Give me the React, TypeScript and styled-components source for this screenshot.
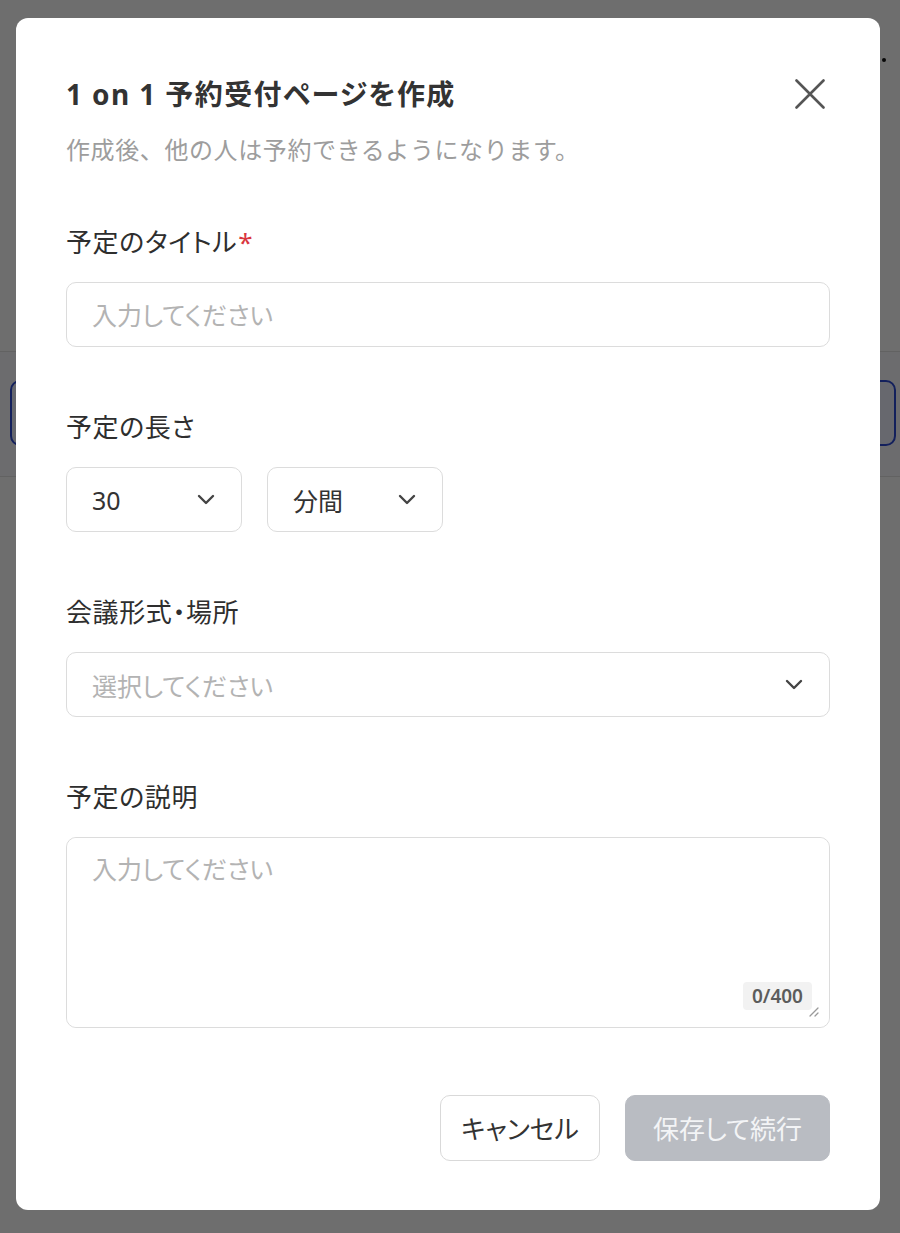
import React from 'react';
import styled, { createGlobalStyle } from 'styled-components';

const GlobalStyle = createGlobalStyle`
  * { box-sizing: border-box; }
  body {
    margin: 0;
    font-family: "Noto Sans", "Noto Sans CJK JP", sans-serif;
    font-feature-settings: "palt";
    background: #ffffff;
  }
`;

/* underlying page, mostly hidden behind the overlay */
const Page = styled.div`
  height: 1233px;
  display: flex;
  flex-direction: column;
`;

const PageHeader = styled.div`
  height: 128px;
  display: flex;
  justify-content: flex-end;
  padding: 58px 14px 0 0;
`;

const MoreDot = styled.span`
  width: 4px;
  height: 4px;
  border-radius: 50%;
  background: #111;
`;

const PageToolbar = styled.div`
  height: 224px;
  border-bottom: 1px solid #e3e3e3;
`;

const PageRow = styled.div`
  height: 125px;
  padding: 28px 4px 0 10px;
  border-bottom: 1px solid #e3e3e3;
  background: #fafbff;
`;

const OutlineBox = styled.div`
  height: 66px;
  border: 2px solid #2e4bd6;
  border-radius: 10px;
  background: #eef1ff;
`;

const Overlay = styled.div`
  position: fixed;
  inset: 0;
  background: rgba(0, 0, 0, 0.57);
  padding: 18px 20px 0 16px;
`;

const Modal = styled.div`
  width: 864px;
  background: #ffffff;
  border-radius: 12px;
  padding: 60px 50px 49px 50px;
  display: flex;
  flex-direction: column;
`;

const Header = styled.div`
  display: flex;
  justify-content: space-between;
  align-items: flex-start;
`;

const TitleBlock = styled.div`
  display: flex;
  flex-direction: column;
  gap: 25px;
`;

const Title = styled.h2`
  margin: 0;
  font-size: 28px;
  line-height: 32px;
  font-weight: 700;
  letter-spacing: 1.4px;
  color: #333333;
`;

const Subtitle = styled.p`
  margin: 0;
  font-size: 24px;
  line-height: 30px;
  letter-spacing: 0.6px;
  font-feature-settings: normal;
  color: #9d9d9d;
`;

const CloseButton = styled.button`
  border: none;
  background: none;
  padding: 0;
  margin: 1px 5px 0 0;
  width: 30px;
  height: 30px;
  cursor: pointer;
  display: flex;
`;

const Fields = styled.div`
  display: flex;
  flex-direction: column;
  gap: 65px;
  margin-top: 62px;
`;

const Field = styled.div`
  display: flex;
  flex-direction: column;
  gap: 25px;
`;

const Label = styled.label`
  font-size: 26px;
  line-height: 30px;
  font-weight: 400;
  letter-spacing: 0.6px;
  color: #2e2e2e;
`;

const Required = styled.span`
  color: #d9363e;
  margin-left: 1px;
`;

const TextInput = styled.input`
  height: 65px;
  width: 100%;
  border: 1.5px solid #dcdcdc;
  border-radius: 10px;
  padding: 0 25px;
  font-family: inherit;
  font-feature-settings: "palt";
  font-size: 25px;
  color: #333;
  outline: none;
  &::placeholder { color: #b3b3b3; }
`;

const SelectRow = styled.div`
  display: flex;
  gap: 25px;
`;

const SelectBox = styled.div<{ $width?: number }>`
  height: 65px;
  width: ${({ $width }) => ($width ? `${$width}px` : '100%')};
  border: 1.5px solid #dcdcdc;
  border-radius: 10px;
  padding: 0 26px 0 25px;
  display: flex;
  align-items: center;
  justify-content: space-between;
`;

const SelectValue = styled.span<{ $placeholder?: boolean }>`
  font-size: 25px;
  color: ${({ $placeholder }) => ($placeholder ? '#b3b3b3' : '#333333')};
`;

const TextAreaWrap = styled.div`
  position: relative;
  height: 191px;
  border: 1.5px solid #dcdcdc;
  border-radius: 10px;
`;

const TextArea = styled.textarea`
  width: 100%;
  height: 100%;
  border: none;
  border-radius: 10px;
  resize: none;
  outline: none;
  padding: 14px 25px;
  font-family: inherit;
  font-feature-settings: "palt";
  font-size: 25px;
  line-height: 34px;
  color: #333;
  &::placeholder { color: #b3b3b3; }
`;

const Counter = styled.span`
  position: absolute;
  right: 17px;
  bottom: 17px;
  background: #f2f2f2;
  border-radius: 4px;
  padding: 0 9px;
  font-size: 19px;
  line-height: 28px;
  font-weight: 600;
  color: #5c5c5c;
`;

const ResizeHandle = styled.svg`
  position: absolute;
  right: 10px;
  bottom: 10px;
`;

const Footer = styled.div`
  display: flex;
  justify-content: flex-end;
  gap: 25px;
  margin-top: 67px;
`;

const Button = styled.button<{ $primary?: boolean }>`
  height: 66px;
  padding: 0 ${({ $primary }) => ($primary ? '27px' : '20px')};
  border-radius: 10px;
  font-family: inherit;
  font-feature-settings: "palt";
  font-size: 26px;
  font-weight: 400;
  border: 1.5px solid ${({ $primary }) => ($primary ? '#b9bcc2' : '#d9d9d9')};
  background: ${({ $primary }) => ($primary ? '#b9bcc2' : '#ffffff')};
  color: ${({ $primary }) => ($primary ? '#f3f4f6' : '#333333')};
`;

const Chevron = () => (
  <svg width="18" height="11" viewBox="0 0 18 11" fill="none">
    <path d="M2 2l7 7 7-7" stroke="#444" strokeWidth="2.4" strokeLinecap="round" strokeLinejoin="round" />
  </svg>
);

export default function App() {
  return (
    <>
      <GlobalStyle />
      <Page>
        <PageHeader>
          <MoreDot />
        </PageHeader>
        <PageToolbar />
        <PageRow>
          <OutlineBox />
        </PageRow>
      </Page>
      <Overlay>
        <Modal>
          <Header>
            <TitleBlock>
              <Title>1 on 1 予約受付ページを作成</Title>
              <Subtitle>作成後、他の人は予約できるようになります。</Subtitle>
            </TitleBlock>
            <CloseButton aria-label="閉じる">
              <svg width="30" height="30" viewBox="0 0 30 30">
                <path d="M1.5 1.5l27 27M28.5 1.5l-27 27" stroke="#555" strokeWidth="2.6" strokeLinecap="round" />
              </svg>
            </CloseButton>
          </Header>

          <Fields>
            <Field>
              <Label>
                予定のタイトル<Required>*</Required>
              </Label>
              <TextInput placeholder="入力してください" />
            </Field>

            <Field>
              <Label>予定の長さ</Label>
              <SelectRow>
                <SelectBox $width={176}>
                  <SelectValue>30</SelectValue>
                  <Chevron />
                </SelectBox>
                <SelectBox $width={176}>
                  <SelectValue>分間</SelectValue>
                  <Chevron />
                </SelectBox>
              </SelectRow>
            </Field>

            <Field>
              <Label>会議形式・場所</Label>
              <SelectBox>
                <SelectValue $placeholder>選択してください</SelectValue>
                <Chevron />
              </SelectBox>
            </Field>

            <Field>
              <Label>予定の説明</Label>
              <TextAreaWrap>
                <TextArea placeholder="入力してください" />
                <Counter>0/400</Counter>
                <ResizeHandle width="12" height="12" viewBox="0 0 12 12">
                  <path d="M11 3L3 11M11 8L8 11" stroke="#9a9a9a" strokeWidth="1.3" strokeLinecap="round" />
                </ResizeHandle>
              </TextAreaWrap>
            </Field>
          </Fields>

          <Footer>
            <Button>キャンセル</Button>
            <Button $primary disabled>保存して続行</Button>
          </Footer>
        </Modal>
      </Overlay>
    </>
  );
}
